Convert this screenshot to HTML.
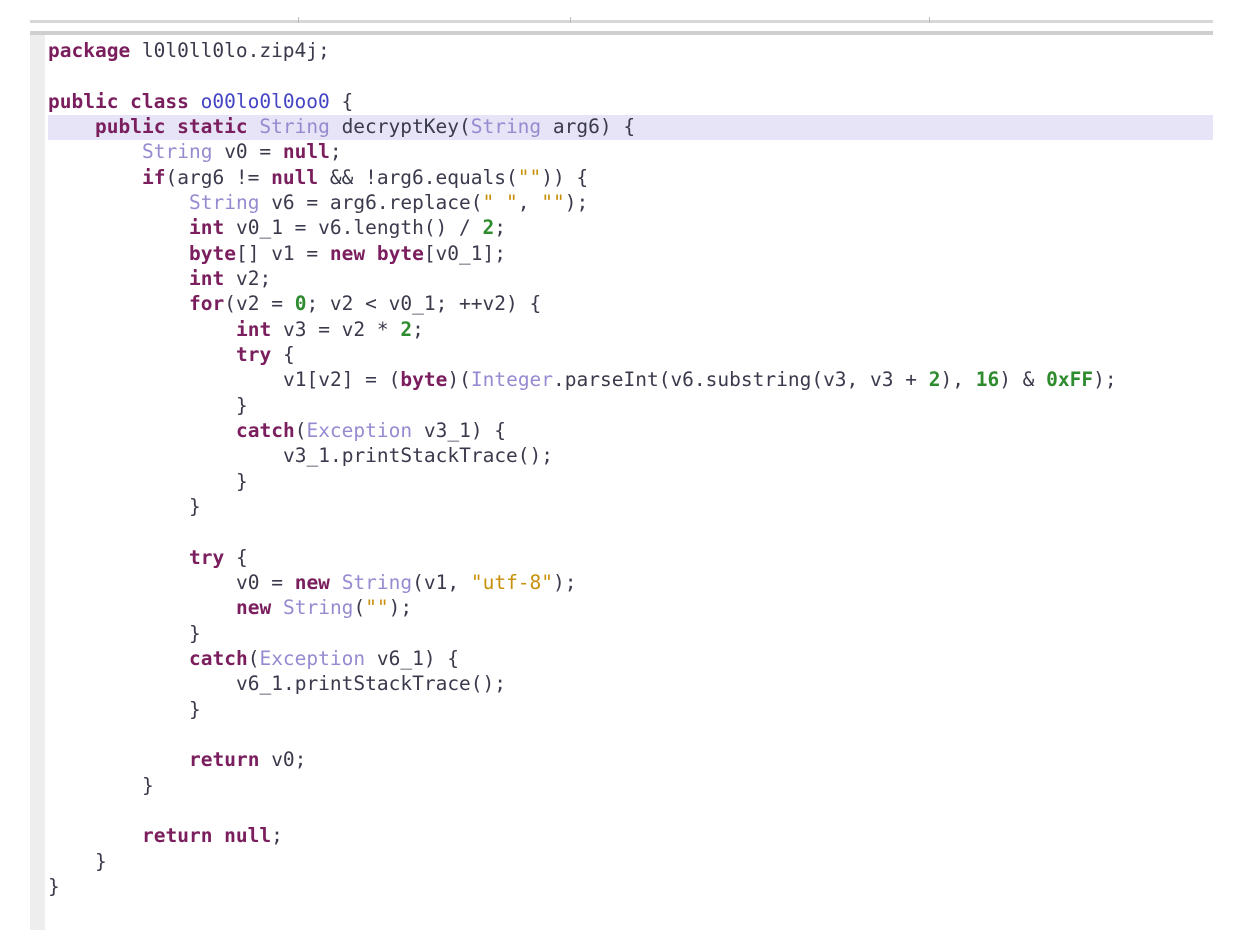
<!DOCTYPE html>
<html><head><meta charset="utf-8"><style>
html,body{margin:0;padding:0;background:#fff;width:1233px;height:952px;overflow:hidden;position:relative}
.bar1{position:absolute;left:30px;top:20px;width:1183px;height:3px;background:#d8d8d8}
.bar2{position:absolute;left:30px;top:31px;width:1183px;height:4px;background:#cfcfcf}
.tick{position:absolute;top:17px;width:1px;height:6px;background:#bbb}
.gut{position:absolute;left:30px;top:35px;width:15px;height:895px;background:#eeeeee}
.hl{position:absolute;left:48px;top:115px;width:1165px;height:25px;background:#e6e4f6}
.l{position:absolute;font-family:"DejaVu Sans Mono","Liberation Mono",monospace;font-size:19.5px;line-height:25px;color:#3a3a4c;white-space:pre}
.k{color:#7a1e5e;font-weight:bold}
.t{color:#968bd0}
.s{color:#c8900a}
.n{color:#2e8b2e;font-weight:bold}
.c{color:#4444c4}
</style></head><body>
<div class="bar1"></div><div class="bar2"></div>
<div class="tick" style="left:298px"></div><div class="tick" style="left:570px"></div><div class="tick" style="left:929px"></div>
<div class="gut"></div><div class="hl"></div>
<div class="l" style="left:48px;top:38px"><span class="k">package</span> l0l0ll0lo.zip4j;</div>
<div class="l" style="left:48px;top:89px"><span class="k">public class</span> <span class="c">o00lo0l0oo0</span> {</div>
<div class="l" style="left:95px;top:114px"><span class="k">public static</span> <span class="t">String</span> decryptKey(<span class="t">String</span> arg6) {</div>
<div class="l" style="left:142px;top:139px"><span class="t">String</span> v0 = <span class="k">null</span>;</div>
<div class="l" style="left:142px;top:165px"><span class="k">if</span>(arg6 != <span class="k">null</span> &amp;&amp; !arg6.equals(<span class="s">""</span>)) {</div>
<div class="l" style="left:189px;top:190px"><span class="t">String</span> v6 = arg6.replace(<span class="s">" "</span>, <span class="s">""</span>);</div>
<div class="l" style="left:189px;top:215px"><span class="k">int</span> v0_1 = v6.length() / <span class="n">2</span>;</div>
<div class="l" style="left:189px;top:241px"><span class="k">byte</span>[] v1 = <span class="k">new byte</span>[v0_1];</div>
<div class="l" style="left:189px;top:266px"><span class="k">int</span> v2;</div>
<div class="l" style="left:189px;top:291px"><span class="k">for</span>(v2 = <span class="n">0</span>; v2 &lt; v0_1; ++v2) {</div>
<div class="l" style="left:236px;top:317px"><span class="k">int</span> v3 = v2 * <span class="n">2</span>;</div>
<div class="l" style="left:236px;top:342px"><span class="k">try</span> {</div>
<div class="l" style="left:283px;top:367px">v1[v2] = (<span class="k">byte</span>)(<span class="t">Integer</span>.parseInt(v6.substring(v3, v3 + <span class="n">2</span>), <span class="n">16</span>) &amp; <span class="n">0xFF</span>);</div>
<div class="l" style="left:236px;top:393px">}</div>
<div class="l" style="left:236px;top:418px"><span class="k">catch</span>(<span class="t">Exception</span> v3_1) {</div>
<div class="l" style="left:283px;top:443px">v3_1.printStackTrace();</div>
<div class="l" style="left:236px;top:469px">}</div>
<div class="l" style="left:189px;top:494px">}</div>
<div class="l" style="left:189px;top:545px"><span class="k">try</span> {</div>
<div class="l" style="left:236px;top:570px">v0 = <span class="k">new</span> <span class="t">String</span>(v1, <span class="s">"utf-8"</span>);</div>
<div class="l" style="left:236px;top:595px"><span class="k">new</span> <span class="t">String</span>(<span class="s">""</span>);</div>
<div class="l" style="left:189px;top:621px">}</div>
<div class="l" style="left:189px;top:646px"><span class="k">catch</span>(<span class="t">Exception</span> v6_1) {</div>
<div class="l" style="left:236px;top:671px">v6_1.printStackTrace();</div>
<div class="l" style="left:189px;top:697px">}</div>
<div class="l" style="left:189px;top:747px"><span class="k">return</span> v0;</div>
<div class="l" style="left:142px;top:773px">}</div>
<div class="l" style="left:142px;top:823px"><span class="k">return null</span>;</div>
<div class="l" style="left:95px;top:849px">}</div>
<div class="l" style="left:48px;top:874px">}</div>
</body></html>
